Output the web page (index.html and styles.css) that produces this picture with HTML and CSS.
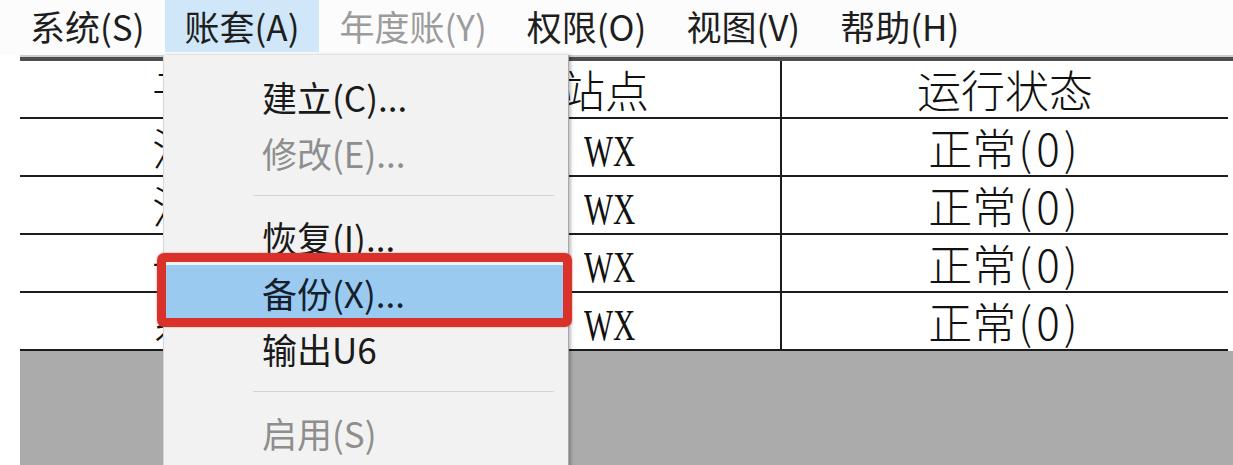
FILE: index.html
```html
<!DOCTYPE html>
<html lang="zh-CN">
<head>
<meta charset="utf-8">
<title>系统管理</title>
<link rel="stylesheet" href="styles.css">
</head>
<body>
<div class="menubar">
  <div class="bar-item">系统(S)</div>
  <div class="bar-item hot">账套(A)</div>
  <div class="bar-item disabled">年度账(Y)</div>
  <div class="bar-item">权限(O)</div>
  <div class="bar-item">视图(V)</div>
  <div class="bar-item">帮助(H)</div>
</div>
<div class="client">
  <div class="list">
    <div class="row head">
      <div class="cell c1">子系统</div>
      <div class="cell c2">站点</div>
      <div class="cell c3">运行状态</div>
    </div>
    <div class="row">
      <div class="cell c1">注册中心</div>
      <div class="cell c2"><span class="serif">WX</span></div>
      <div class="cell c3">正常<span class="num">(0)</span></div>
    </div>
    <div class="row">
      <div class="cell c1">注册中心</div>
      <div class="cell c2"><span class="serif">WX</span></div>
      <div class="cell c3">正常<span class="num">(0)</span></div>
    </div>
    <div class="row">
      <div class="cell c1">一般服务</div>
      <div class="cell c2"><span class="serif">WX</span></div>
      <div class="cell c3">正常<span class="num">(0)</span></div>
    </div>
    <div class="row">
      <div class="cell c1">系统管理</div>
      <div class="cell c2"><span class="serif">WX</span></div>
      <div class="cell c3">正常<span class="num">(0)</span></div>
    </div>
  </div>
  <div class="empty"></div>
</div>
<div class="dropdown">
  <div class="mi">建立(C)...</div>
  <div class="mi disabled">修改(E)...</div>
  <div class="sep"></div>
  <div class="mi">恢复(I)...</div>
  <div class="mi active">备份(X)...<span class="mark"></span></div>
  <div class="mi">输出U6</div>
  <div class="sep"></div>
  <div class="mi disabled">启用(S)</div>
</div>
</body>
</html>
```
FILE: styles.css
```css
html, body {
  margin: 0;
  padding: 0;
}
body {
  width: 1233px;
  height: 465px;
  overflow: hidden;
  position: relative;
  background: #ffffff;
  font-family: "Noto Sans CJK SC", "Noto Sans", sans-serif;
}
.menubar {
  display: flex;
  height: 55px;
  padding-left: 10px;
  background: #fcfcfc;
}
.bar-item {
  height: 52px;
  line-height: 52px;
  padding: 0 20px;
  font-size: 35px;
  color: #1e1e1e;
  white-space: nowrap;
}
.bar-item.hot {
  background: #cfe7f8;
}
.bar-item.disabled {
  color: #9c9c9c;
}
.client {
  margin-left: 20px;
  margin-top: 2px;
  border-top: 4px solid #4e4e4e;
  box-shadow: 0 -2px 0 #cdcdcd;
  background: #ababab;
  height: 420px;
}
.list {
  background: #ffffff;
}
.row {
  display: grid;
  grid-template-columns: 537px 223px 448px;
  width: 1208px;
  height: 58px;
  box-sizing: border-box;
  border-bottom: 2px solid #1c1c1c;
}
.cell {
  height: 56px;
  line-height: 56px;
  font-size: 44px;
  font-weight: 300;
  color: #111;
  white-space: nowrap;
  overflow: hidden;
}
.c1 {
  padding-left: 132px;
}
.c2 {
  padding-left: 27px;
}
.head .c2 {
  padding-left: 4px;
}
.c3 {
  border-left: 2px solid #1c1c1c;
  text-align: center;
}
.serif {
  display: inline-block;
  font-family: "Liberation Serif", serif;
  font-size: 44px;
  transform: scaleX(0.7);
  transform-origin: left center;
}
.num {
  letter-spacing: 4px;
  margin-left: 2px;
}
.empty {
  height: 70px;
}
.dropdown {
  position: absolute;
  left: 163px;
  top: 55px;
  width: 406px;
  height: 420px;
  box-sizing: border-box;
  padding-top: 14px;
  background: #f2f2f2;
  border-left: 1px solid #d6d6d6;
  border-right: 1px solid #a8a8a8;
  box-shadow: 2px 0 3px rgba(0, 0, 0, 0.25);
}
.mi {
  position: relative;
  height: 56px;
  line-height: 56px;
  padding-left: 98px;
  font-size: 35px;
  color: #1a1a1a;
  white-space: nowrap;
}
.mi.disabled {
  color: #8e8e8e;
}
.mi.active {
  background: #9acaf0;
  color: #14202c;
}
.mark {
  position: absolute;
  left: -7px;
  right: -4px;
  top: -12px;
  bottom: -6px;
  border: 9px solid #d9322b;
  border-radius: 7px;
  box-shadow: 0 0 2px rgba(217, 50, 43, 0.6);
}
.sep {
  height: 28px;
  display: flex;
  align-items: center;
  padding-left: 89px;
  padding-right: 14px;
}
.sep::before {
  content: "";
  flex: 1;
  height: 1px;
  background: #d4d4d4;
}
```
